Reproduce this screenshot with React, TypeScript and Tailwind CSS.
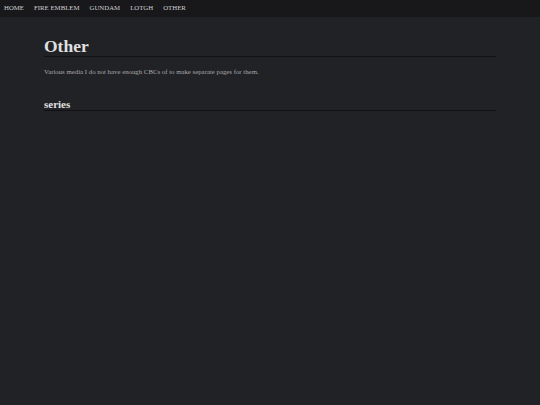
const navItems = ['HOME', 'FIRE EMBLEM', 'GUNDAM', 'LOTGH', 'OTHER'];

export default function App() {
  return (
    <div className="min-h-[405px] bg-[#212226] font-['Liberation_Serif',serif] text-[#d8d8d8]">
      {/* Top nav */}
      <nav className="flex h-[17px] items-center gap-[10px] bg-[#18181b] px-[4px] text-[6.8px] text-[#cfcfcf]">
        {navItems.map((item) => (
          <span key={item}>{item}</span>
        ))}
      </nav>

      <main className="mx-[44px] w-[452px] pt-[21px]">
        <h1 className="border-b border-[#111113] pb-[1px] text-[17.5px] leading-[17px] font-bold text-[#e0e0e0]">
          Other
        </h1>
        <p className="mt-[10px] text-[6.8px] text-[#a8a8a8]">
          Various media I do not have enough CBCs of to make separate pages for them.
        </p>
        <h2 className="mt-[22px] border-b border-[#111113] text-[11px] leading-[11px] font-bold text-[#e0e0e0]">
          series
        </h2>
      </main>
    </div>
  );
}
